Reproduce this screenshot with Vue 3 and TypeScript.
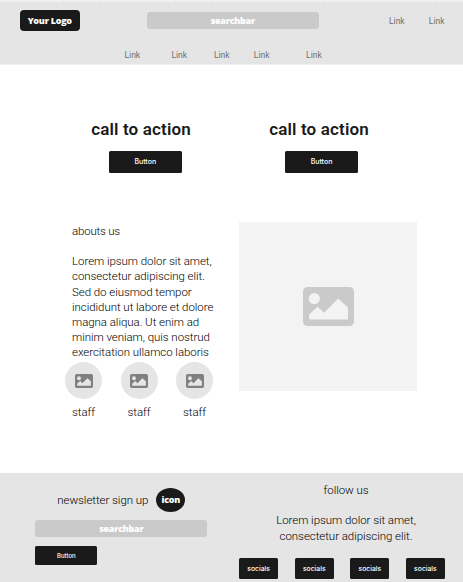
<script setup lang="ts">
const accountLinks: string[] = ['Link', 'Link']
const navLinks: string[] = ['Link', 'Link', 'Link', 'Link', 'Link']
const actions: string[] = ['call to action', 'call to action']
const about: string[] = [
  'Lorem ipsum dolor sit amet,',
  'consectetur adipiscing elit.',
  'Sed do eiusmod tempor',
  'incididunt ut labore et dolore',
  'magna aliqua. Ut enim ad',
  'minim veniam, quis nostrud',
  'exercitation ullamco laboris',
]
const staff: string[] = ['staff', 'staff', 'staff']
const socials: string[] = ['socials', 'socials', 'socials', 'socials']
const picture =
  'M5 0H46Q51 0 51 5V34Q51 39 46 39H5Q0 39 0 34V5Q0 0 5 0ZM11.3 6A5.6 5.6 0 1 0 11.3 17.2A5.6 5.6 0 1 0 11.3 6ZM6.2 32.4H45V20.5L35.2 11.5L21 25.8L14.5 19.7L6.2 27.5Z'
</script>

<template>
  <div class="page">
    <header class="header">
      <div class="ruler"></div>
      <div class="top">
        <div class="logo">Your Logo</div>
        <div class="search">searchbar</div>
        <nav class="account">
          <a v-for="(l, i) in accountLinks" :key="i" class="link">{{ l }}</a>
        </nav>
      </div>
      <nav class="nav">
        <a v-for="(l, i) in navLinks" :key="i" class="link">{{ l }}</a>
      </nav>
    </header>

    <section class="actions">
      <div v-for="(a, i) in actions" :key="i" class="action">
        <h2>{{ a }}</h2>
        <button class="btn">Button</button>
      </div>
    </section>

    <section class="main">
      <div class="about">
        <p class="line title">abouts us</p>
        <div class="copy">
          <p v-for="l in about" :key="l" class="line">{{ l }}</p>
        </div>
        <div class="staff">
          <div v-for="(s, i) in staff" :key="i" class="member">
            <div class="avatar">
              <svg viewBox="0 0 51 39" preserveAspectRatio="none"><path :d="picture" fill-rule="evenodd" /></svg>
            </div>
            <span class="line">{{ s }}</span>
          </div>
        </div>
      </div>
      <div class="photo">
        <svg viewBox="0 0 51 39"><path :d="picture" fill-rule="evenodd" /></svg>
      </div>
    </section>

    <footer class="footer">
      <div class="newsletter">
        <div class="signup">
          <span class="line">newsletter sign up</span>
          <span class="badge">icon</span>
        </div>
        <div class="search">searchbar</div>
        <button class="btn small">Button</button>
      </div>
      <div class="follow">
        <p class="line">follow us</p>
        <div class="blurb">
          <p class="line">Lorem ipsum dolor sit amet,</p>
          <p class="line">consectetur adipiscing elit.</p>
        </div>
        <div class="socials">
          <button v-for="(s, i) in socials" :key="i" class="btn social">{{ s }}</button>
        </div>
      </div>
    </footer>
  </div>
</template>

<style>
body {
  margin: 0;
  background: #fff;
}
</style>

<style scoped>
.page {
  width: 463px;
  height: 582px;
  overflow: hidden;
  display: flex;
  flex-direction: column;
  color: #1a1a1a;
  font-family: Roboto, 'Liberation Sans', sans-serif;
}
.page * {
  box-sizing: border-box;
}
p,
h2 {
  margin: 0;
}
.header {
  height: 65px;
  flex: none;
  background: #e5e5e5;
  border-bottom: 1px solid #f0f0f0;
}
.ruler {
  height: 2px;
  background: repeating-linear-gradient(90deg, #f1f1f1 0 26px, #e6e6e6 26px 27px, #f1f1f1 27px 37.2px);
}
.top {
  display: flex;
  align-items: flex-start;
  padding: 8px 18.5px 0 20px;
}
.logo {
  width: 59.5px;
  height: 21px;
  border-radius: 4px;
  background: #1a1a1a;
  color: #fff;
  font: 800 9px/21px 'Open Sans', sans-serif;
  letter-spacing: -0.25px;
  text-align: center;
  white-space: nowrap;
}
.search {
  width: 172px;
  height: 17px;
  border-radius: 3px;
  background: #cacaca;
  color: #fff;
  font: 800 9px/17px 'Open Sans', sans-serif;
  letter-spacing: -0.25px;
  text-align: center;
}
.top .search {
  margin: 2px 0 0 67.3px;
}
.link {
  font-size: 8.5px;
  line-height: 10px;
  color: #707070;
}
.account {
  display: flex;
  gap: 24.2px;
  margin: 6px 0 0 auto;
}
.nav {
  display: flex;
  gap: 29.3px;
  padding: 19px 0 0 124.5px;
}
.nav .link:nth-child(2) {
  margin-left: 2px;
}
.nav .link:nth-child(3) {
  margin-left: -2.5px;
}
.nav .link:nth-child(4) {
  margin-left: -5px;
}
.nav .link:nth-child(5) {
  margin-left: 7.3px;
}
.actions {
  display: grid;
  grid-template-columns: 178px 178px;
  padding: 54px 0 0 52px;
  height: 157px;
  flex: none;
}
.action {
  display: flex;
  flex-direction: column;
  align-items: center;
}
.action h2 {
  font-size: 17px;
  font-weight: 600;
  line-height: 20px;
  letter-spacing: 0.15px;
  white-space: nowrap;
}
.btn {
  border: 0;
  padding: 0;
  width: 73px;
  height: 22px;
  border-radius: 1.5px;
  background: #1a1a1a;
  color: #fff;
  font: 500 7px/22px Inter, sans-serif;
  text-align: center;
}
.action .btn {
  margin-top: 12px;
}
.action:first-child .btn {
  margin-left: 8.5px;
}
.action:last-child .btn {
  margin-left: 5px;
}
.main {
  display: flex;
  height: 251px;
  flex: none;
}
.about {
  width: 239px;
  padding: 2px 0 0 72px;
}
.line {
  display: block;
  font-size: 11.5px;
  font-weight: 300;
  line-height: 15.17px;
  white-space: nowrap;
  letter-spacing: -0.05px;
  color: #000;
}
.title {
  letter-spacing: -0.2px;
}
.copy {
  margin-top: 15px;
}
.staff {
  display: flex;
  gap: 18.5px;
  margin: 1.8px 0 0 -7px;
}
.member {
  width: 37px;
  display: flex;
  flex-direction: column;
  align-items: center;
}
.avatar {
  width: 37px;
  height: 37px;
  border-radius: 50%;
  background: #e5e5e5;
  display: flex;
  align-items: center;
  justify-content: center;
}
.avatar svg {
  width: 18px;
  height: 14px;
  fill: #808080;
}
.member .line {
  margin-top: 5.5px;
}
.photo {
  width: 178px;
  height: 169px;
  background: #f3f3f3;
  display: flex;
  align-items: center;
  justify-content: center;
}
.photo svg {
  width: 51px;
  height: 39px;
  fill: #cacaca;
}
.footer {
  height: 109px;
  flex: none;
  background: #e5e5e5;
  display: flex;
}
.newsletter {
  width: 239px;
  padding: 15px 0 0 35.3px;
}
.signup {
  display: flex;
  align-items: center;
  padding-left: 22px;
  height: 24px;
}
.signup .line {
  width: 92px;
  padding-top: 1px;
}
.badge {
  width: 29px;
  height: 24px;
  margin-left: 7px;
  border-radius: 50%;
  background: #1a1a1a;
  color: #fff;
  font: 800 9px/23px 'Open Sans', sans-serif;
  letter-spacing: -0.25px;
  text-align: center;
}
.newsletter .search {
  margin-top: 8px;
}
.small {
  display: block;
  width: 62px;
  height: 19px;
  margin-top: 9px;
  font-size: 6px;
  line-height: 19px;
}
.follow {
  width: 206px;
  padding-top: 10px;
}
.follow .line {
  text-align: center;
  padding-left: 8px;
}
.blurb {
  margin-top: 14px;
}
.blurb .line {
  line-height: 16px;
}
.socials {
  display: flex;
  gap: 16.3px;
  margin-top: 14px;
}
.social {
  width: 39.3px;
  height: 21px;
  flex: none;
  font-size: 6.8px;
  line-height: 21px;
}
</style>
